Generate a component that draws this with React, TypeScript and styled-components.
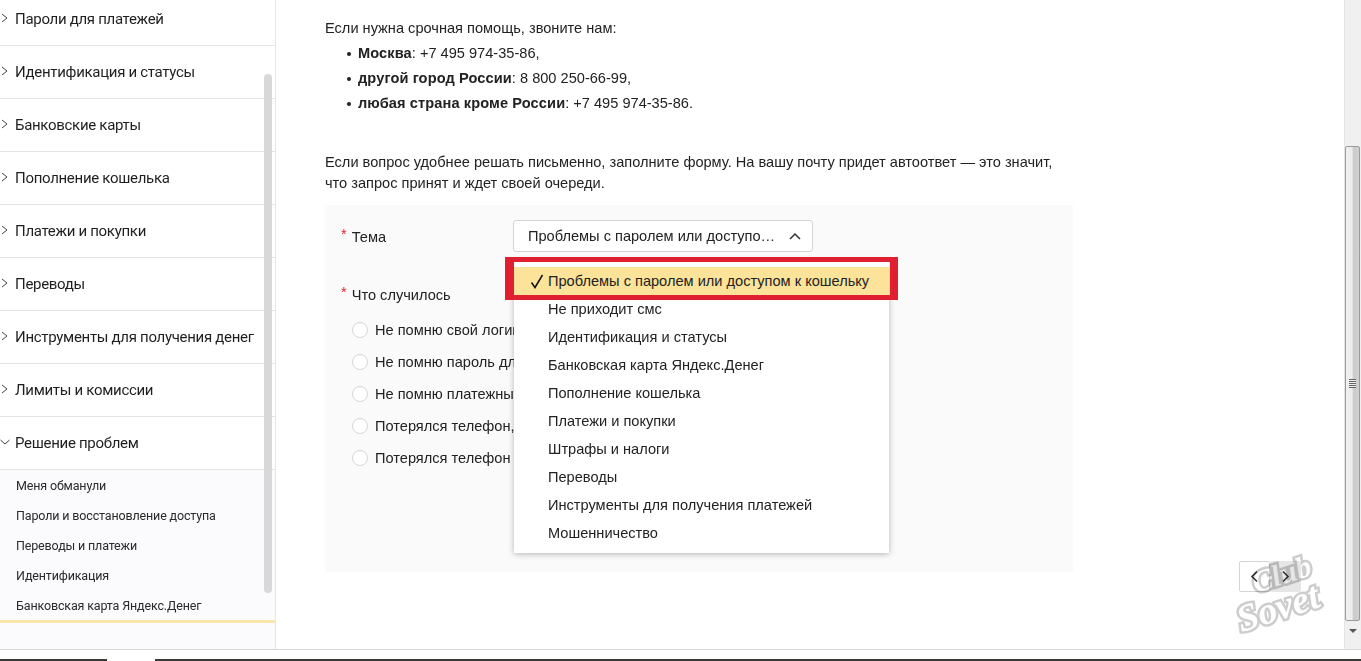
import React from "react";
import styled, { createGlobalStyle } from "styled-components";

const Global = createGlobalStyle`
  html, body {
    margin: 0;
    padding: 0;
    background: #fff;
    overflow: hidden;
  }
  * {
    box-sizing: border-box;
  }
`;

const Page = styled.div`
  position: relative;
  width: 1361px;
  height: 661px;
  overflow: hidden;
  display: flex;
  flex-direction: column;
  font-family: "Liberation Sans", Arial, sans-serif;
  color: #222;
`;

const Body = styled.div`
  height: 649px;
  display: flex;
  flex: none;
`;

const Sidebar = styled.nav`
  position: relative;
  width: 276px;
  flex: none;
  border-right: 1px solid #e6e6e6;
  overflow: hidden;
  background: #fff;
`;

const SideList = styled.div`
  margin-top: -7px;
  font-family: Roboto, "Noto Sans", sans-serif;
`;

const SideRow = styled.div`
  height: 53px;
  display: flex;
  align-items: center;
  padding: 0 0 1px 15px;
  position: relative;
  border-bottom: 1px solid #e4e4e4;
  font-size: 15px;
  letter-spacing: -0.3px;
  color: #1f1f1f;
`;

const Chevron = styled.svg`
  position: absolute;
  left: 0;
  top: 50%;
  width: 10px;
  height: 10px;
  margin-top: -6px;
  fill: none;
  stroke: #444;
  stroke-width: 1;
`;

const SubList = styled.div`
  background: #fbfafc;
  height: 187px;
`;

const SubRow = styled.div`
  height: 30px;
  display: flex;
  align-items: center;
  padding-left: 16px;
  font-size: 12.5px;
  letter-spacing: -0.15px;
  color: #2a2a2a;
`;

const Active = styled.div`
  height: 3px;
  background: #fae7ae;
`;

const SideThumb = styled.div`
  position: absolute;
  left: 264px;
  top: 74px;
  width: 8px;
  height: 519px;
  border-radius: 4px;
  background: #d8d8d8;
`;

const Main = styled.main`
  flex: 1;
  padding: 18px 0 0 49px;
  position: relative;
  font-size: 14.6px;
`;

const Line = styled.p`
  margin: 0 0 3px;
  line-height: 20px;
`;

const PhoneList = styled.ul`
  margin: 0 0 36px;
  padding: 0 0 0 33px;
  list-style: none;
`;

const Phone = styled.li`
  height: 25px;
  line-height: 25px;
  position: relative;
  b {
    font-weight: 700;
    letter-spacing: 0.1px;
  }
  &::before {
    content: "";
    position: absolute;
    left: -11px;
    top: 11px;
    width: 4px;
    height: 4px;
    border-radius: 50%;
    background: #222;
  }
`;

const Para = styled.p`
  margin: 0 0 11px;
  line-height: 21px;
  width: 745px;
`;

const Panel = styled.section`
  width: 748px;
  height: 367px;
  background: #fbfafb;
  padding: 15px 0 0 16px;
`;

const FieldRow = styled.div`
  display: flex;
  align-items: center;
  height: 32px;
`;

const Label = styled.div`
  width: 172px;
  flex: none;
  padding-top: 1px;
  color: #222;
  span {
    color: #d9262c;
    margin-right: 5px;
    position: relative;
    top: -3px;
  }
`;

const SelectWrap = styled.div`
  position: relative;
  width: 300px;
  height: 32px;
`;

const SelectBtn = styled.div`
  height: 32px;
  border: 1px solid #d4d4d4;
  border-radius: 3px;
  background: #fff;
  display: flex;
  align-items: center;
  justify-content: space-between;
  padding: 0 11px 0 14px;
  svg {
    width: 12px;
    height: 8px;
    fill: none;
    stroke: #333;
    stroke-width: 1.5;
  }
`;

const Menu = styled.div`
  position: absolute;
  left: 1px;
  top: 41px;
  width: 375px;
  height: 292px;
  padding: 6px 0;
  background: #fff;
  box-shadow: 0 1px 6px rgba(0, 0, 0, 0.28);
  z-index: 2;
`;

const MenuItem = styled.div<{ $on?: boolean }>`
  position: relative;
  height: 28px;
  line-height: 28px;
  padding-left: 34px;
  background: ${(p) => (p.$on ? "#fbe39a" : "transparent")};
  svg {
    position: absolute;
    left: 16px;
    top: 7px;
    width: 14px;
    height: 15px;
    fill: none;
    stroke: #111;
    stroke-width: 1.5;
  }
`;

const RedBox = styled.div`
  position: absolute;
  left: -8px;
  top: 37px;
  width: 393px;
  height: 43px;
  border: solid #e02030;
  border-width: 5px 8px 5px 9px;
  z-index: 3;
`;

const Question = styled(FieldRow)`
  margin-top: 26px;
`;

const Radios = styled.div`
  margin-top: 4px;
  padding-left: 11px;
`;

const Radio = styled.div`
  height: 32px;
  display: flex;
  align-items: center;
  gap: 7px;
  i {
    width: 16px;
    height: 16px;
    border-radius: 50%;
    border: 1px solid #d6d6d6;
    background: #fff;
  }
`;

const Pager = styled.div`
  position: absolute;
  left: 963px;
  top: 561px;
  display: flex;
`;

const PageBtn = styled.div<{ $on?: boolean }>`
  width: 31px;
  height: 31px;
  display: flex;
  align-items: center;
  justify-content: center;
  border: ${(p) => (p.$on ? "1px solid #d4d4d4" : "none")};
  border-radius: 2px;
  background: ${(p) => (p.$on ? "transparent" : "#e6e6e6")};
  svg {
    width: 9px;
    height: 13px;
    fill: none;
    stroke: #333;
    stroke-width: 1.6;
  }
`;

const Mark = styled.div`
  position: absolute;
  left: 1232px;
  top: 562px;
  width: 100px;
  height: 66px;
  transform: rotate(-18deg);
  font-family: "Liberation Serif", serif;
  font-style: italic;
  font-weight: 700;
  color: #fff;
  -webkit-text-stroke: 5px #cdcdcd;
  paint-order: stroke fill;
  mix-blend-mode: multiply;
  pointer-events: none;
`;

const MarkTop = styled.div`
  font-size: 30px;
  line-height: 26px;
  padding-left: 26px;
`;

const MarkBottom = styled.div`
  font-size: 38px;
  line-height: 34px;
`;

const ScrollBar = styled.div`
  width: 17px;
  flex: none;
  height: 649px;
  margin-left: auto;
  background: #f0f0f0;
  border-left: 1px solid #e4e4e4;
  position: relative;
`;

const Thumb = styled.div`
  position: absolute;
  left: 0;
  top: 146px;
  width: 15px;
  height: 475px;
  border: 1px solid #9a9a9a;
  border-radius: 2px;
  background: linear-gradient(90deg, #f1f1f1 0%, #ececec 45%, #c9c9c9 60%, #d2d2d2 100%);
  display: flex;
  align-items: center;
  justify-content: center;
  &::after {
    content: "";
    width: 7px;
    height: 9px;
    background: repeating-linear-gradient(180deg, #666 0 1px, #eee 1px 2px);
  }
`;

const Arrow = styled.svg`
  position: absolute;
  left: 4px;
  top: 629px;
  width: 8px;
  height: 4px;
  fill: #555;
`;

const Footer = styled.div`
  height: 12px;
  flex: none;
  border-top: 1px solid #d8d8d8;
  background: #fff;
  display: flex;
  flex-direction: column;
  justify-content: flex-end;
`;

const TaskBar = styled.div`
  height: 2px;
  background: linear-gradient(90deg, #3a3a36 0 107px, #fff 107px 155px, #3a3a36 155px);
`;

const topics = [
  "Пароли для платежей",
  "Идентификация и статусы",
  "Банковские карты",
  "Пополнение кошелька",
  "Платежи и покупки",
  "Переводы",
  "Инструменты для получения денег",
  "Лимиты и комиссии",
];

const subs = [
  "Меня обманули",
  "Пароли и восстановление доступа",
  "Переводы и платежи",
  "Идентификация",
  "Банковская карта Яндекс.Денег",
];

const reasons = [
  "Не помню свой логин",
  "Не помню пароль для",
  "Не помню платежный",
  "Потерялся телефон,",
  "Потерялся телефон",
];

const menu = [
  "Не приходит смс",
  "Идентификация и статусы",
  "Банковская карта Яндекс.Денег",
  "Пополнение кошелька",
  "Платежи и покупки",
  "Штрафы и налоги",
  "Переводы",
  "Инструменты для получения платежей",
  "Мошенничество",
];

export default function App() {
  return (
    <Page>
      <Global />
      <Body>
        <Sidebar>
          <SideList>
            {topics.map((t) => (
              <SideRow key={t}>
                <Chevron viewBox="0 0 10 10">
                  <path d="M2 1l5 4-5 4" />
                </Chevron>
                {t}
              </SideRow>
            ))}
            <SideRow>
              <Chevron viewBox="0 0 10 10">
                <path d="M0.5 3l4.5 4 4.5-4" />
              </Chevron>
              Решение проблем
            </SideRow>
            <SubList>
              {subs.map((s) => (
                <SubRow key={s}>{s}</SubRow>
              ))}
              <Active />
            </SubList>
          </SideList>
          <SideThumb />
        </Sidebar>

        <Main>
          <Line>Если нужна срочная помощь, звоните нам:</Line>
          <PhoneList>
            <Phone>
              <b>Москва</b>: +7 495 974-35-86,
            </Phone>
            <Phone>
              <b>другой город России</b>: 8 800 250-66-99,
            </Phone>
            <Phone>
              <b>любая страна кроме России</b>: +7 495 974-35-86.
            </Phone>
          </PhoneList>
          <Para>
            Если вопрос удобнее решать письменно, заполните форму. На вашу почту придет автоответ — это значит,
            <br />
            что запрос принят и ждет своей очереди.
          </Para>
          <Panel>
            <FieldRow>
              <Label>
                <span>*</span>Тема
              </Label>
              <SelectWrap>
                <SelectBtn>
                  Проблемы с паролем или доступо…
                  <svg viewBox="0 0 12 8">
                    <path d="M1 7l5-5 5 5" />
                  </svg>
                </SelectBtn>
                <Menu>
                  <MenuItem $on>
                    <svg viewBox="0 0 14 15">
                      <path d="M1.5 8.5l3.5 5L12.5 1" />
                    </svg>
                    Проблемы с паролем или доступом к кошельку
                  </MenuItem>
                  {menu.map((m) => (
                    <MenuItem key={m}>{m}</MenuItem>
                  ))}
                </Menu>
                <RedBox />
              </SelectWrap>
            </FieldRow>
            <Question>
              <Label>
                <span>*</span>Что случилось
              </Label>
            </Question>
            <Radios>
              {reasons.map((r) => (
                <Radio key={r}>
                  <i />
                  {r}
                </Radio>
              ))}
            </Radios>
          </Panel>
          <Pager>
            <PageBtn $on>
              <svg viewBox="0 0 9 13">
                <path d="M7 1.5L2 6.5l5 5" />
              </svg>
            </PageBtn>
            <PageBtn>
              <svg viewBox="0 0 9 13">
                <path d="M2 1.5l5 5-5 5" />
              </svg>
            </PageBtn>
          </Pager>
        </Main>

        <ScrollBar>
          <Thumb />
          <Arrow viewBox="0 0 8 4">
            <path d="M0 0h8L4 4z" />
          </Arrow>
        </ScrollBar>
      </Body>
      <Footer>
        <TaskBar />
      </Footer>
      <Mark>
        <MarkTop>Club</MarkTop>
        <MarkBottom>Sovet</MarkBottom>
      </Mark>
    </Page>
  );
}
